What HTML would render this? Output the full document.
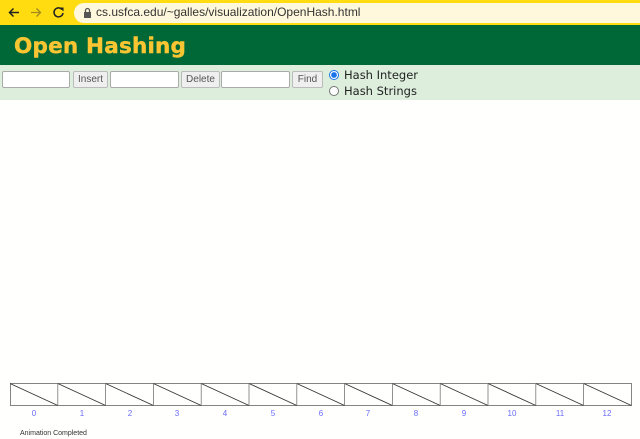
<!DOCTYPE html>
<html><head><meta charset="utf-8"><style>
body{margin:0;width:640px;height:439px;overflow:hidden;background:#fffffd;font-family:"Liberation Sans",Arial,sans-serif;position:relative}
.top{position:absolute;left:0;top:0;width:640px;height:25px;background:#fedc0f}
.pill{position:absolute;left:74px;top:3px;width:580px;height:20px;border-radius:10px;background:#fff8dc}
.url{position:absolute;left:96px;top:5px;font-size:12px;color:#333}
.hdr{position:absolute;left:0;top:25px;width:640px;height:40px;background:#006837}
.hdr h1{margin:0;position:absolute;left:14px;top:9px;font-size:21.5px;font-weight:bold;color:#f9c532;font-family:"DejaVu Sans",sans-serif;letter-spacing:0.2px;-webkit-text-stroke:0.4px #f9c532}
.bar{position:absolute;left:0;top:65px;width:640px;height:35px;background:#ddeedd}
.in{position:absolute;top:6px;height:15px;background:#fff;border:1px solid #aaa;border-radius:2px}
.bt{position:absolute;top:6px;height:15px;background:#efefef;border:1px solid #bbb;border-radius:2px;font-size:10px;color:#555;text-align:center;line-height:15px}
.rad{position:absolute;width:8px;height:8px;border-radius:50%;border:1px solid #777;background:#fff}
.rl{position:absolute;font-size:11.5px;color:#222;font-family:"DejaVu Sans",sans-serif}
.lbl{position:absolute;top:409px;font-size:8px;color:#6a6aff;width:20px;text-align:center}
</style></head><body>
<div class="top">
<svg width="74" height="25" style="position:absolute;left:0;top:0">
<path d="M19 12.5H10M13.5 8.5L9.5 12.5L13.5 16.5" stroke="#222" stroke-width="1.5" fill="none"/>
<path d="M31 12.5H40M36.5 8.5L40.5 12.5L36.5 16.5" stroke="#a08a20" stroke-width="1.3" fill="none"/>
<path d="M62 9.5A4.5 4.5 0 1 0 63 13" stroke="#222" stroke-width="1.5" fill="none"/><path d="M59.5 7.5h4v4z" fill="#222"/>
</svg>
<div class="pill"><svg width="10" height="12" style="position:absolute;left:9px;top:4px"><rect x="1" y="5" width="7" height="6" fill="#555"/><path d="M2.5 5V3.5a2 2 0 0 1 4 0V5" stroke="#555" fill="none" stroke-width="1.3"/></svg></div>
<div class="url">cs.usfca.edu/~galles/visualization/OpenHash.html</div>
</div>
<div class="hdr"><h1>Open Hashing</h1></div>
<div class="bar">
<div class="in" style="left:2px;width:66px"></div>
<div class="bt" style="left:73px;width:33px">Insert</div>
<div class="in" style="left:110px;width:67px"></div>
<div class="bt" style="left:181px;width:37px">Delete</div>
<div class="in" style="left:221px;width:67px"></div>
<div class="bt" style="left:292px;width:29px">Find</div>
<div class="rad" style="left:329px;top:5px;border-color:#1a73e8;background:radial-gradient(circle,#1a73e8 45%,#fff 55%)"></div>
<div class="rl" style="left:344px;top:3px">Hash Integer</div>
<div class="rad" style="left:329px;top:21px"></div>
<div class="rl" style="left:344px;top:19px">Hash Strings</div>
</div>
<svg width="640" height="30" style="position:absolute;left:0;top:380px">
<g stroke="#666" stroke-width="0.8" fill="none">
<rect x="10.5" y="3.5" width="621" height="22"/>
</g>
<g stroke="#333" stroke-width="0.9">
<line x1="10" y1="3.5" x2="57.8" y2="25.5"/><line x1="57.8" y1="3.5" x2="105.6" y2="25.5"/><line x1="105.6" y1="3.5" x2="153.4" y2="25.5"/><line x1="153.4" y1="3.5" x2="201.2" y2="25.5"/><line x1="201.2" y1="3.5" x2="249" y2="25.5"/><line x1="249" y1="3.5" x2="296.8" y2="25.5"/><line x1="296.8" y1="3.5" x2="344.6" y2="25.5"/><line x1="344.6" y1="3.5" x2="392.4" y2="25.5"/><line x1="392.4" y1="3.5" x2="440.2" y2="25.5"/><line x1="440.2" y1="3.5" x2="488" y2="25.5"/><line x1="488" y1="3.5" x2="535.8" y2="25.5"/><line x1="535.8" y1="3.5" x2="583.6" y2="25.5"/><line x1="583.6" y1="3.5" x2="631.4" y2="25.5"/>
</g>
<g stroke="#777" stroke-width="0.8">
<line x1="57.8" y1="3.5" x2="57.8" y2="25.5"/><line x1="105.6" y1="3.5" x2="105.6" y2="25.5"/><line x1="153.4" y1="3.5" x2="153.4" y2="25.5"/><line x1="201.2" y1="3.5" x2="201.2" y2="25.5"/><line x1="249" y1="3.5" x2="249" y2="25.5"/><line x1="296.8" y1="3.5" x2="296.8" y2="25.5"/><line x1="344.6" y1="3.5" x2="344.6" y2="25.5"/><line x1="392.4" y1="3.5" x2="392.4" y2="25.5"/><line x1="440.2" y1="3.5" x2="440.2" y2="25.5"/><line x1="488" y1="3.5" x2="488" y2="25.5"/><line x1="535.8" y1="3.5" x2="535.8" y2="25.5"/><line x1="583.6" y1="3.5" x2="583.6" y2="25.5"/>
</g>
</svg>
<div class="lbl" style="left:24px">0</div><div class="lbl" style="left:72px">1</div><div class="lbl" style="left:120px">2</div><div class="lbl" style="left:167px">3</div><div class="lbl" style="left:215px">4</div><div class="lbl" style="left:263px">5</div><div class="lbl" style="left:311px">6</div><div class="lbl" style="left:358px">7</div><div class="lbl" style="left:406px">8</div><div class="lbl" style="left:454px">9</div><div class="lbl" style="left:502px">10</div><div class="lbl" style="left:550px">11</div><div class="lbl" style="left:597px">12</div>
<div style="position:absolute;left:20px;top:430px;font-size:7px;color:#333">Animation Completed</div>
</body></html>
